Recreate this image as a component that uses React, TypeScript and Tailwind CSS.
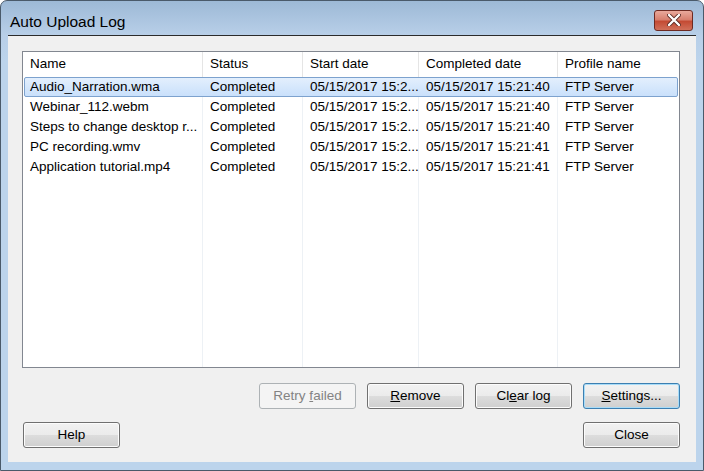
import React from "react";

type Row = {
  name: string;
  status: string;
  start: string;
  completed: string;
  profile: string;
};

const rows: Row[] = [
  { name: "Audio_Narration.wma", status: "Completed", start: "05/15/2017 15:2...", completed: "05/15/2017 15:21:40", profile: "FTP Server" },
  { name: "Webinar_112.webm", status: "Completed", start: "05/15/2017 15:2...", completed: "05/15/2017 15:21:40", profile: "FTP Server" },
  { name: "Steps to change desktop r...", status: "Completed", start: "05/15/2017 15:2...", completed: "05/15/2017 15:21:40", profile: "FTP Server" },
  { name: "PC recording.wmv", status: "Completed", start: "05/15/2017 15:2...", completed: "05/15/2017 15:21:41", profile: "FTP Server" },
  { name: "Application tutorial.mp4", status: "Completed", start: "05/15/2017 15:2...", completed: "05/15/2017 15:21:41", profile: "FTP Server" },
];

const cols = ["Name", "Status", "Start date", "Completed date", "Profile name"];
const widths = ["w-[180px]", "w-[100px]", "w-[116px]", "w-[139px]", "w-[119px]"];

function WinButton({
  children,
  disabled,
  focused,
}: {
  children: React.ReactNode;
  disabled?: boolean;
  focused?: boolean;
}) {
  if (disabled) {
    return (
      <button className="w-[97px] h-[26px] rounded-[3px] border border-[#adb2b5] bg-[#f4f4f4] text-[#838383] text-[13.5px]">
        {children}
      </button>
    );
  }
  return (
    <button
      className={`w-[97px] h-[26px] rounded-[3px] border ${
        focused ? "border-[#3c7fb1] shadow-[inset_0_0_0_1px_#a8dcf8]" : "border-[#707070] shadow-[inset_0_0_0_1px_#fcfcfc]"
      } bg-[linear-gradient(#f2f2f2_0%,#ebebeb_50%,#dddddd_50%,#cfcfcf_100%)] text-black text-[13.5px]`}
    >
      {children}
    </button>
  );
}

export default function App() {
  return (
    <div
      className="w-[704px] h-[471px] flex flex-col border border-[#4a5a6a] rounded-t-[7px] bg-[linear-gradient(#9db9d6_0px,#b8cfe8_34px,#bcd4ec_60px,#bcd4ec_100%)] overflow-hidden"
      style={{ fontFamily: '"Liberation Sans", Arial, sans-serif' }}
    >
      {/* Title bar */}
      <div className="h-[34px] flex items-center justify-between pl-[9px] pr-[10px] pt-[8px]">
        <span className="text-[15.5px] text-black">Auto Upload Log</span>
        <div className="w-[39px] h-[21px] mt-[-4px] rounded-[3px] border border-[#6d2a22] bg-[linear-gradient(#e9a99c_0%,#d8806f_45%,#c44b34_55%,#d0705a_100%)] flex items-center justify-center">
          <svg width="14" height="12" viewBox="0 0 14 12">
            <path d="M2 1 L12 11 M12 1 L2 11" stroke="#5a2a24" strokeWidth="4" strokeLinecap="round" />
            <path d="M2 1 L12 11 M12 1 L2 11" stroke="#ffffff" strokeWidth="2.4" strokeLinecap="round" />
          </svg>
        </div>
      </div>

      {/* Client area */}
      <div className="mx-[7px] flex-1 mb-[8px] border-t border-[#2b2b2b] bg-[#f0f0f0] flex flex-col pl-[14px] pr-[16px] pt-[15px]">
        {/* List view */}
        <div className="h-[317px] border border-[#828790] bg-white flex flex-col relative">
          {/* Header */}
          <div className="h-[25px] flex text-[13.5px] text-black">
            {cols.map((c, i) => (
              <div
                key={c}
                className={`${widths[i]} h-full flex items-center pl-[7px] ${i < cols.length - 1 ? "border-r border-[#e5e5e5]" : ""}`}
              >
                {c}
              </div>
            ))}
          </div>
          {/* Gridlines */}
          <div className="absolute left-0 right-0 top-[25px] bottom-0 flex pointer-events-none">
            {widths.map((w, i) => (
              <div key={i} className={`${w} h-full ${i < widths.length - 1 ? "border-r border-[#edf1f5]" : ""}`} />
            ))}
          </div>
          {/* Rows */}
          <div className="flex flex-col relative">
            {rows.map((r, idx) => (
              <div
                key={r.name}
                className={`h-[20px] flex items-center text-[13.5px] text-black ${
                  idx === 0
                    ? "mx-[1px] rounded-[2px] border border-[#7da2ce] bg-[linear-gradient(#e3effd,#c9e0fb)]"
                    : "mx-[1px] border border-transparent"
                }`}
              >
                {[r.name, r.status, r.start, r.completed, r.profile].map((v, i) => (
                  <div
                    key={i}
                    className={`${i === 0 ? "w-[178px] pl-[5px]" : widths[i] + " pl-[7px]"} whitespace-nowrap overflow-hidden`}
                  >
                    {v}
                  </div>
                ))}
              </div>
            ))}
          </div>
        </div>

        {/* Action buttons */}
        <div className="flex justify-end gap-[11px] mt-[15px]">
          <WinButton disabled>
            Retry <span className="underline">f</span>ailed
          </WinButton>
          <WinButton>
            <span className="underline">R</span>emove
          </WinButton>
          <WinButton>
            Cl<span className="underline">e</span>ar log
          </WinButton>
          <WinButton focused>
            <span className="underline">S</span>ettings...
          </WinButton>
        </div>

        {/* Bottom buttons */}
        <div className="flex justify-between mt-[13px] pl-[1px]">
          <WinButton>Help</WinButton>
          <WinButton>Close</WinButton>
        </div>
      </div>
    </div>
  );
}
